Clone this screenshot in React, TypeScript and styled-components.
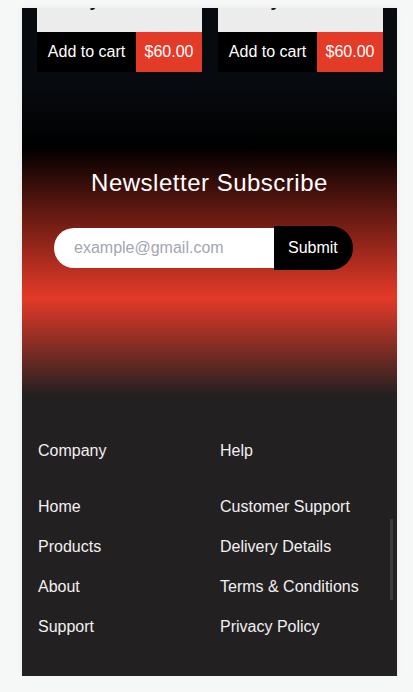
import React from "react";
import styled, { createGlobalStyle } from "styled-components";

const Global = createGlobalStyle`
  html, body { margin: 0; padding: 0; background: #f6f7f7; }
  body { font-family: "Liberation Sans", Arial, sans-serif; }
  * { box-sizing: border-box; }
`;

const Frame = styled.div`
  position: relative;
  width: 375px;
  height: 668px;
  margin: 8px 0 0 22px;
  overflow: hidden;
  background: #232021;
  box-shadow: 0 0 6px rgba(0, 0, 0, 0.06);
`;

const ScrollThumb = styled.div`
  position: absolute;
  left: 368px;
  top: 511px;
  width: 3px;
  height: 81px;
  background: #3c393a;
`;

const Products = styled.section`
  display: grid;
  grid-template-columns: 165px 165px;
  gap: 16px;
  padding: 0 14px 16px 15px;
  background: #070a0e;
`;

const Card = styled.div`
  display: flex;
  flex-direction: column;
`;

const CardBody = styled.div`
  height: 24px;
  overflow: hidden;
  background: #ececec;
  text-align: center;
`;

const CardTitle = styled.h3`
  margin: -19px 0 0;
  font-size: 18px;
  line-height: 22px;
  font-weight: 700;
  color: #111;
`;

const ButtonRow = styled.div`
  display: flex;
  height: 40px;
`;

const CartButton = styled.button`
  flex: 1;
  border: 0;
  background: #000;
  color: #fff;
  font: 16px "Liberation Sans", Arial, sans-serif;
  padding: 0;
`;

const PriceTag = styled.span`
  width: 66px;
  display: flex;
  align-items: center;
  justify-content: center;
  background: #e43a28;
  color: #fff;
  font-size: 16px;
`;

const Newsletter = styled.section`
  height: 312px;
  padding-top: 81px;
  background: linear-gradient(
    to bottom,
    #070a0e 0px,
    #000 60px,
    #e43a28 210px,
    #232021 307px
  );
`;

const NewsTitle = styled.h2`
  margin: 0;
  text-align: center;
  color: #fff;
  font-size: 24px;
  line-height: 28px;
  font-weight: 400;
  letter-spacing: 0.5px;
`;

const Form = styled.form`
  display: flex;
  align-items: center;
  margin-top: 29px;
  padding-left: 32px;
`;

const EmailInput = styled.input`
  width: 220px;
  height: 40px;
  border: 0;
  outline: none;
  border-radius: 20px 0 0 20px;
  background: #fff;
  padding: 0 0 0 20px;
  font: 16px "Liberation Sans", Arial, sans-serif;
  color: #333;
  &::placeholder { color: #a2a6b2; }
`;

const SubmitButton = styled.button`
  width: 79px;
  height: 44px;
  border: 0;
  border-radius: 0 22px 22px 0;
  background: #000;
  color: #fff;
  font: 16px "Liberation Sans", Arial, sans-serif;
  text-align: left;
  padding: 0 0 0 14px;
`;

const Footer = styled.footer`
  display: grid;
  grid-template-columns: 167px 1fr;
  column-gap: 15px;
  padding: 39px 16px 29px;
  background: #232021;
  color: #f1f1f1;
`;

const Column = styled.div`
  display: flex;
  flex-direction: column;
`;

const ColHead = styled.h4`
  margin: 0 0 24px;
  font-size: 16px;
  line-height: 24px;
  font-weight: 400;
`;

const LinkList = styled.ul`
  list-style: none;
  margin: 0;
  padding: 0;
`;

const LinkItem = styled.li`
  font-size: 16px;
  line-height: 40px;
  white-space: nowrap;
`;

const products = [
  { name: "Ivory Necklace", price: "$60.00" },
  { name: "Ivory Necklace", price: "$60.00" },
];

const columns = [
  { head: "Company", links: ["Home", "Products", "About", "Support"] },
  {
    head: "Help",
    links: ["Customer Support", "Delivery Details", "Terms & Conditions", "Privacy Policy"],
  },
];

export default function App() {
  return (
    <>
      <Global />
      <Frame>
        <Products>
          {products.map((p, i) => (
            <Card key={i}>
              <CardBody>
                <CardTitle>{p.name}</CardTitle>
              </CardBody>
              <ButtonRow>
                <CartButton type="button">Add to cart</CartButton>
                <PriceTag>{p.price}</PriceTag>
              </ButtonRow>
            </Card>
          ))}
        </Products>
        <Newsletter>
          <NewsTitle>Newsletter Subscribe</NewsTitle>
          <Form onSubmit={(e) => e.preventDefault()}>
            <EmailInput type="email" placeholder="example@gmail.com" />
            <SubmitButton type="submit">Submit</SubmitButton>
          </Form>
        </Newsletter>
        <Footer>
          {columns.map((c) => (
            <Column key={c.head}>
              <ColHead>{c.head}</ColHead>
              <LinkList>
                {c.links.map((l) => (
                  <LinkItem key={l}>{l}</LinkItem>
                ))}
              </LinkList>
            </Column>
          ))}
        </Footer>
        <ScrollThumb />
      </Frame>
    </>
  );
}
